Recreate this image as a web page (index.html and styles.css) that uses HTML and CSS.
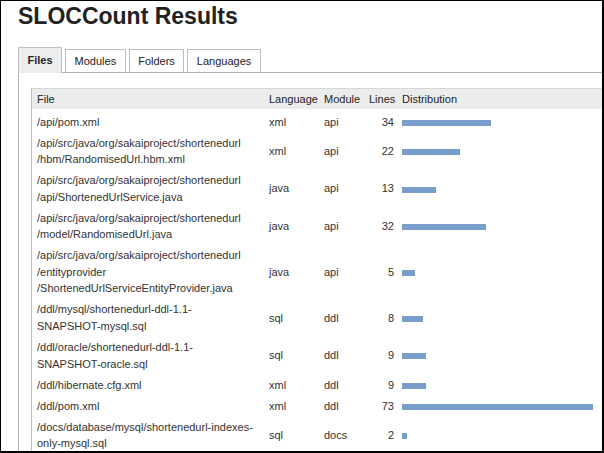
FILE: index.html
```html
<!DOCTYPE html>
<html>
<head>
<meta charset="utf-8">
<title>SLOCCount Results</title>
<link rel="stylesheet" href="styles.css">
</head>
<body>
<div class="frame">
  <h1 class="title">SLOCCount Results</h1>
  <div class="tabs">
    <div class="tab active">Files</div>
    <div class="tab">Modules</div>
    <div class="tab">Folders</div>
    <div class="tab">Languages</div>
  </div>
  <div class="panel">
    <table class="results">
      <colgroup>
        <col class="c-file"><col class="c-lang"><col class="c-mod"><col class="c-lines"><col>
      </colgroup>
      <thead>
        <tr><th>File</th><th>Language</th><th>Module</th><th class="num">Lines</th><th>Distribution</th></tr>
      </thead>
      <tbody>
        <tr><td>/api/pom.xml</td><td>xml</td><td>api</td><td class="num">34</td><td><span class="bar" style="width:89px"></span></td></tr>
        <tr><td>/api/src/java/org/sakaiproject/shortenedurl<br>/hbm/RandomisedUrl.hbm.xml</td><td>xml</td><td>api</td><td class="num">22</td><td><span class="bar" style="width:58px"></span></td></tr>
        <tr><td>/api/src/java/org/sakaiproject/shortenedurl<br>/api/ShortenedUrlService.java</td><td>java</td><td>api</td><td class="num">13</td><td><span class="bar" style="width:34px"></span></td></tr>
        <tr><td>/api/src/java/org/sakaiproject/shortenedurl<br>/model/RandomisedUrl.java</td><td>java</td><td>api</td><td class="num">32</td><td><span class="bar" style="width:84px"></span></td></tr>
        <tr><td>/api/src/java/org/sakaiproject/shortenedurl<br>/entityprovider<br>/ShortenedUrlServiceEntityProvider.java</td><td>java</td><td>api</td><td class="num">5</td><td><span class="bar" style="width:13px"></span></td></tr>
        <tr><td>/ddl/mysql/shortenedurl-ddl-1.1-<br>SNAPSHOT-mysql.sql</td><td>sql</td><td>ddl</td><td class="num">8</td><td><span class="bar" style="width:21px"></span></td></tr>
        <tr><td>/ddl/oracle/shortenedurl-ddl-1.1-<br>SNAPSHOT-oracle.sql</td><td>sql</td><td>ddl</td><td class="num">9</td><td><span class="bar" style="width:24px"></span></td></tr>
        <tr><td>/ddl/hibernate.cfg.xml</td><td>xml</td><td>ddl</td><td class="num">9</td><td><span class="bar" style="width:24px"></span></td></tr>
        <tr><td>/ddl/pom.xml</td><td>xml</td><td>ddl</td><td class="num">73</td><td><span class="bar" style="width:191px"></span></td></tr>
        <tr><td>/docs/database/mysql/shortenedurl-indexes-<br>only-mysql.sql</td><td>sql</td><td>docs</td><td class="num">2</td><td><span class="bar" style="width:5px"></span></td></tr>
      </tbody>
    </table>
  </div>
</div>
</body>
</html>
```
FILE: styles.css
```css
html, body {
  margin: 0;
  padding: 0;
  background: #fff;
}
body {
  font-family: "Liberation Sans", Arial, Helvetica, sans-serif;
  color: #333;
}
.frame {
  width: 604px;
  height: 453px;
  box-sizing: border-box;
  border-style: solid;
  border-color: #000;
  border-width: 1px 2px 2px 1px;
  overflow: hidden;
  background: #fff;
}
.title {
  margin: 1px 0 0 17px;
  font-size: 23px;
  line-height: 28px;
  font-weight: 700;
  color: #222;
}
.tabs {
  display: flex;
  align-items: flex-end;
  gap: 3px;
  margin: 17px 0 0 17px;
}
.tab {
  font-size: 11px;
  height: 22px;
  line-height: 22px;
  padding: 0 8.5px;
  border: 1px solid #bdbdbd;
  border-bottom: none;
  background: #fff;
  color: #222;
}
.tab.active {
  height: 25px;
  line-height: 24px;
  margin-bottom: -1px;
  background: #eceeee;
  font-weight: 700;
  position: relative;
  z-index: 1;
}
.panel {
  margin-left: 17px;
  width: 700px;
  border-top: 1px solid #b4b4b4;
  border-left: 1px solid #b4b4b4;
  padding: 15px 0 0 12px;
  min-height: 500px;
}
.results {
  table-layout: fixed;
  width: 620px;
  border-collapse: separate;
  border-spacing: 0;
  border-left: 1px solid #bcbcbc;
  font-size: 11px;
  line-height: 16.5px;
}
.c-file { width: 232px; }
.c-lang { width: 55px; }
.c-mod { width: 45px; }
.c-lines { width: 33px; }
.results th {
  background: #ebeded;
  border-top: 1px solid #d6d6d6;
  font-weight: 400;
  text-align: left;
  padding: 1.5px 3px 1.5px 5px;
  white-space: nowrap;
  color: #222;
}
.results tbody tr:first-child td {
  padding-top: 5px;
}
.results td {
  padding: 2.3px 3px 2.3px 5px;
  vertical-align: middle;
  white-space: nowrap;
}
.results .num {
  text-align: right;
  padding-right: 3px;
}
.bar {
  display: inline-block;
  height: 6px;
  background: #789fcb;
  vertical-align: middle;
}
```
